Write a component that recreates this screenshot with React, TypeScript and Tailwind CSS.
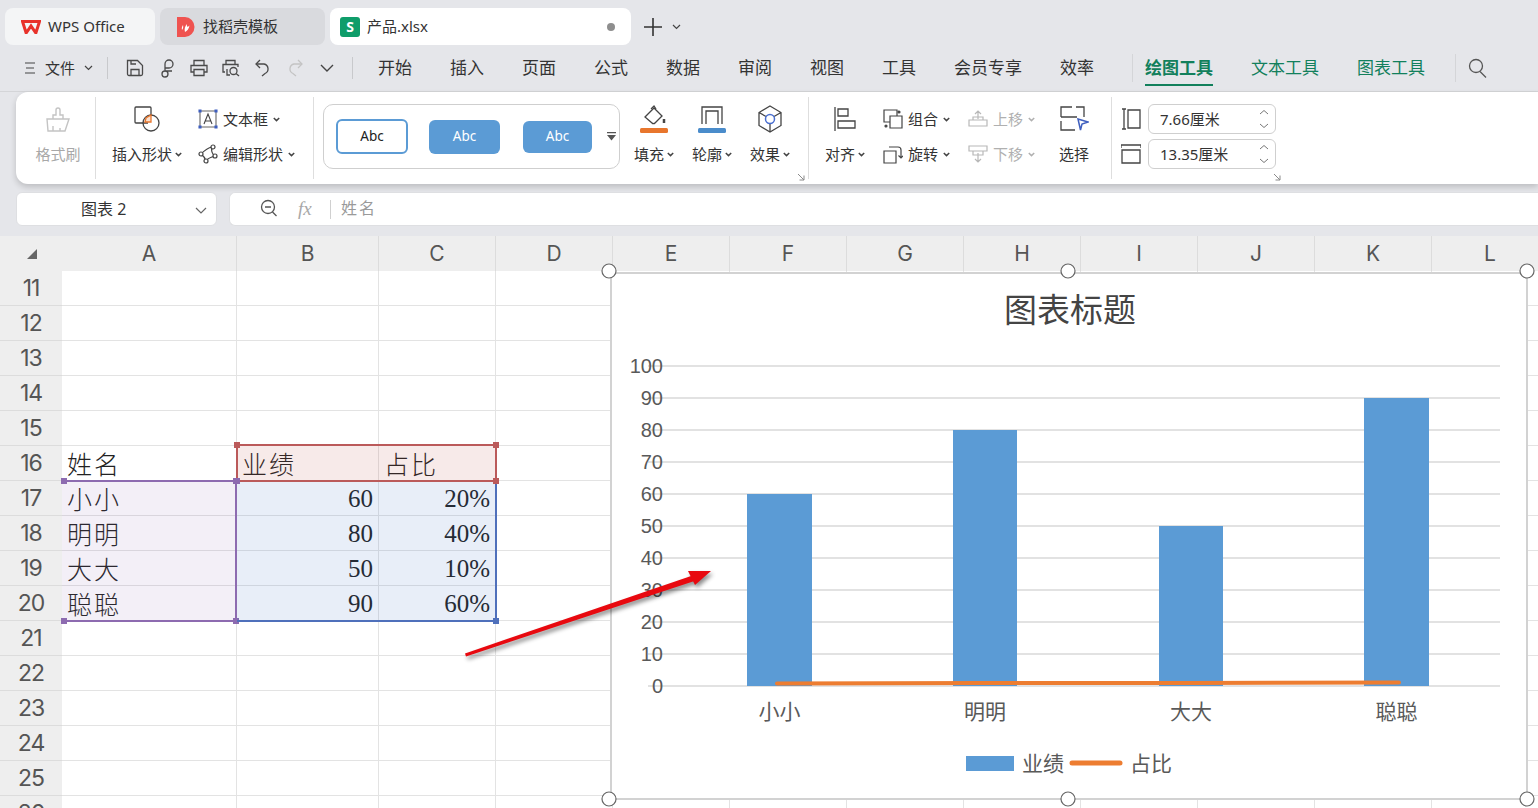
import React from "react"

const ui = "[font-family:Noto_Sans,Noto_Sans_CJK_SC,sans-serif]"

const menus = ["开始", "插入", "页面", "公式", "数据", "审阅", "视图", "工具", "会员专享", "效率"]
const columns = [
    { name: "A", width: "w-[175px]" },
    { name: "B", width: "w-[142px]" },
    { name: "C", width: "w-[117px]" },
    { name: "D", width: "w-[117px]" },
    { name: "E", width: "w-[117px]" },
    { name: "F", width: "w-[117px]" },
    { name: "G", width: "w-[117px]" },
    { name: "H", width: "w-[117px]" },
    { name: "I", width: "w-[117px]" },
    { name: "J", width: "w-[117px]" },
    { name: "K", width: "w-[117px]" },
    { name: "L", width: "w-[117px]" },
]
const rows: Record<number, [string, string, string]> = {
    16: ["姓名", "业绩", "占比"],
    17: ["小小", "60", "20%"],
    18: ["明明", "80", "40%"],
    19: ["大大", "50", "10%"],
    20: ["聪聪", "90", "60%"],
}
const rowNumbers = Array.from({ length: 16 }, (_, i) => i + 11)
const bars = [
    { x: 747, w: 65, v: 60, label: "小小" },
    { x: 953, w: 64, v: 80, label: "明明" },
    { x: 1159, w: 64, v: 50, label: "大大" },
    { x: 1364, w: 65, v: 90, label: "聪聪" },
]
const ticks = [100, 90, 80, 70, 60, 50, 40, 30, 20, 10, 0]

const Ico: React.FC<{ size?: number; stroke?: string; children: React.ReactNode }> = ({ size = 20, stroke = "#4a4a4a", children }) => (
    <svg width={size} height={size} viewBox="0 0 20 20" fill="none" stroke={stroke} strokeWidth="1.3" className="shrink-0">
        {children}
    </svg>
)

const Caret: React.FC<{ color?: string }> = ({ color = "#444" }) => (
    <svg width="7" height="5" viewBox="0 0 7 5" fill="none" stroke={color} strokeWidth="1.5" className="shrink-0">
        <path d="M.8 1l2.7 2.6L6.2 1" />
    </svg>
)

const Corner = () => (
    <svg width="8" height="8" viewBox="0 0 8 8" fill="none" stroke="#8a8a8a" strokeWidth="1">
        <path d="M1 1l6 6M7 2.500V7H2.500" />
    </svg>
)

const ToolCol: React.FC<{ label: string; width: string; gray?: boolean; caret?: boolean; children: React.ReactNode }> = ({ label, width, gray, caret = true, children }) => (
    <div className={`flex flex-col items-center pt-3 shrink-0 ${width}`}>
        <div className="h-[30px] flex items-center justify-center">{children}</div>
        <div className={`mt-[7px] h-[26px] flex items-center gap-[3px] text-[15px] ${gray ? "text-[#a8a8a8]" : "text-[#333]"}`}>
            {label}
            {caret && !gray && <Caret />}
        </div>
    </div>
)

const SmallBtn: React.FC<{ label: string; gray?: boolean; children: React.ReactNode }> = ({ label, gray, children }) => (
    <div className={`h-[30px] flex items-center text-[15px] whitespace-nowrap ${gray ? "text-[#b0b0b0]" : "text-[#333]"}`}>
        <span className="w-5 mr-[5px] flex justify-center">{children}</span>
        {label}
        <span className="ml-[5px]"><Caret color={gray ? "#b0b0b0" : "#444"} /></span>
    </div>
)

const Divider = () => <div className="w-px h-[82px] self-center bg-[#dedede] shrink-0" />

const SizeInput: React.FC<{ value: string }> = ({ value }) => (
    <div className="w-[128px] h-[30px] border border-[#cfcfcf] rounded-md flex items-center pl-[11px] pr-[6px] justify-between text-[15px] text-[#333]">
        {value}
        <svg width="10" height="22" viewBox="0 0 10 22" fill="none" stroke="#777" strokeWidth="1">
            <path d="M1 6l4-3.500L9 6M1 16l4 3.500 4-3.500" />
        </svg>
    </div>
)

const Handle: React.FC<{ className: string }> = ({ className }) => (
    <span className={`absolute w-[6px] h-[6px] ${className}`} />
)

function Tabs() {
    return (
        <div className="flex items-center h-[37px] mt-2 pl-[5px] gap-[5px] shrink-0">
            <div className="w-[150px] h-[37px] bg-[#f4f5f6] rounded-lg flex items-center pl-[16px] gap-[7px] text-[15px] text-[#333]">
                <svg width="20" height="14" viewBox="0 0 20 14" fill="none" stroke="#e8322b" strokeWidth="3">
                    <path d="M1.500 1.500h17L15 12.500h-.5L10 6l-4.500 6.500H5z" strokeLinejoin="miter" />
                </svg>
                WPS Office
            </div>
            <div className="w-[165px] h-[37px] bg-[#d9dade] rounded-lg flex items-center pl-[17px] gap-[8px] text-[15px] text-[#333]">
                <svg width="18" height="20" viewBox="0 0 18 20">
                    <path d="M0 0h8a9.500 10 0 0 1 0 20H0z" fill="#ef5350" />
                    <path d="M8 15c-1-3 0-6 2-8-.3 3 .2 3.500 2.500 1.500C12 12 10 14 8 15zM5 13c-.5-2 0-3.500 1-5 .3 2 .5 3 -1 5z" fill="#fff" />
                </svg>
                找稻壳模板
            </div>
            <div className="w-[301px] h-[37px] bg-white rounded-lg flex items-center pl-[10px] text-[15px] text-[#333]">
                <span className="w-5 h-5 rounded-[3px] bg-[#0f9d6a] text-white text-[14px] font-bold flex items-center justify-center">S</span>
                <span className="ml-[7px]">产品.xlsx</span>
                <span className="ml-auto mr-4 w-2 h-2 rounded-full bg-[#8e8e8e]" />
            </div>
            <svg width="20" height="20" viewBox="0 0 20 20" stroke="#333" strokeWidth="1.600" className="ml-[7px]">
                <path d="M10 1v18M1 10h18" />
            </svg>
            <svg width="9" height="6" viewBox="0 0 9 6" fill="none" stroke="#444" strokeWidth="1.200" className="ml-[4px]">
                <path d="M1 1l3.500 3.500L8 1" />
            </svg>
        </div>
    )
}

function MenuBar() {
    return (
        <div className="h-[47px] flex items-center shrink-0 border-b border-[#d4d5d8] text-[#333]">
            <svg width="14" height="14" viewBox="0 0 14 14" stroke="#444" strokeWidth="1.200" className="ml-[23px]">
                <path d="M2 2h10M3 7h8M2 12h10" />
            </svg>
            <span className="ml-[8px] text-[15px]">文件</span>
            <svg width="9" height="6" viewBox="0 0 9 6" fill="none" stroke="#444" strokeWidth="1.200" className="ml-[9px]">
                <path d="M1 1l3.500 3.500L8 1" />
            </svg>
            <div className="w-px h-[22px] bg-[#c8c9cc] ml-[14px]" />
            <div className="ml-[17px] flex items-center gap-[12px]">
                <Ico>
                    <path d="M2.500 2.500h10l5 5v8.500a1.500 1.500 0 0 1-1.500 1.500H4a1.500 1.500 0 0 1-1.500-1.500z" />
                    <path d="M6 17.500v-6h8v6M6 2.500v3.500h5" />
                </Ico>
                <Ico>
                    <path d="M8 13V6a4 4 0 1 1 4 4H8M8 13a3 3 0 1 1-3 3v0a3 3 0 0 1 3-3zM8 13h7" />
                </Ico>
                <Ico>
                    <path d="M5 7V2.500h10V7M5 14H2V7.500h16V14h-3" />
                    <path d="M5 11.500h10v6H5z" />
                </Ico>
                <Ico>
                    <path d="M5 6V2.500h9V6M4 14H2V6.500h15V9" />
                    <path d="M6 11v6h3" />
                    <circle cx="12.500" cy="13" r="3.500" />
                    <path d="M15 15.500l3 2.500" />
                </Ico>
                <Ico>
                    <path d="M7 2L3 6l4 4" />
                    <path d="M3 6h8a5 5 0 0 1 1 9.500L9 18" />
                </Ico>
                <Ico stroke="#c4c4c4">
                    <path d="M13 2l4 4-4 4" />
                    <path d="M17 6H9a5 5 0 0 0-1 9.500l3 2.500" />
                </Ico>
                <svg width="14" height="8" viewBox="0 0 14 8" fill="none" stroke="#444" strokeWidth="1.400" className="ml-[3px]">
                    <path d="M1 1l6 6 6-6" />
                </svg>
            </div>
            <div className="w-px h-[22px] bg-[#c8c9cc] ml-[18px]" />
            <div className="ml-[25px] flex items-center gap-[38px] text-[17px]">
                {menus.map(m => <span key={m}>{m}</span>)}
            </div>
            <div className="w-px h-[28px] bg-[#d4d5d8] ml-[38px]" />
            <div className="ml-[12px] flex items-center gap-[38px] text-[17px] text-[#12805c]">
                <span className="relative font-bold">
                    绘图工具
                    <span className="absolute left-0 right-0 -bottom-[5px] h-[2px] bg-[#12805c]" />
                </span>
                <span>文本工具</span>
                <span>图表工具</span>
            </div>
            <div className="w-px h-[28px] bg-[#d4d5d8] ml-[30px]" />
            <svg width="22" height="24" viewBox="0 0 22 24" fill="none" stroke="#555" strokeWidth="1.300" className="ml-[11px]">
                <circle cx="9" cy="10" r="6.500" />
                <path d="M13 15.500l6 6" />
            </svg>
        </div>
    )
}

function Ribbon() {
    return (
        <div className={`ml-4 h-[92px] bg-white rounded-l-xl shadow-[0_3px_6px_rgba(0,0,0,0.18)] flex shrink-0 ${ui}`}>
            <ToolCol label="格式刷" width="w-[79px] pl-[5px]" gray caret={false}>
                <svg width="26" height="26" viewBox="0 0 26 26" fill="none" stroke="#c4c4c4" strokeWidth="1.400">
                    <path d="M2 13h22l-4 12H3zM8 13V9h3V4a2 2 0 0 1 4 0v5h3v4M8 25v-5M15 25v-3" />
                </svg>
            </ToolCol>
            <Divider />
            <div className="w-[217px] flex shrink-0 pl-[15px]">
                <ToolCol label="插入形状" width="w-[72px]">
                    <svg width="28" height="28" viewBox="0 0 28 28" fill="none" stroke="#444" strokeWidth="1.300">
                        <path d="M15 18H3a1 1 0 0 1-1-1V3a1 1 0 0 1 1-1h14a1 1 0 0 1 1 1v8" />
                        <circle cx="18" cy="18" r="8" />
                        <path d="M12 17l1-4 5-3v7z" fill="#fbe1cf" stroke="#e8762d" />
                    </svg>
                </ToolCol>
                <div className="ml-[15px] pt-3 flex flex-col gap-[5px]">
                    <SmallBtn label="文本框">
                        <svg width="20" height="20" viewBox="0 0 20 20" fill="none" stroke="#444" strokeWidth="1.100">
                            <path d="M2 2v16M18 2v16M2 2h16M2 18h16" stroke="#666" />
                            <path d="M6 15l4-10 4 10M7.300 12h5.400" />
                            <path d="M1 1h2v2H1zM17 1h2v2h-2zM1 17h2v2H1zM17 17h2v2h-2z" fill="#3f5fbf" stroke="#3f5fbf" />
                        </svg>
                    </SmallBtn>
                    <SmallBtn label="编辑形状">
                        <svg width="20" height="20" viewBox="0 0 20 20" fill="none" stroke="#444" strokeWidth="1.200">
                            <path d="M14 3C9 4 6 7 3 10c3 2 4 4 5 7 2-3 5-4 9-5-3-2-4-5-3-9z" />
                            <circle cx="15" cy="3" r="2" fill="#fff" />
                            <circle cx="3" cy="10" r="2" fill="#fff" />
                            <circle cx="8" cy="17" r="2" fill="#fff" />
                            <circle cx="17" cy="12" r="2" fill="#fff" />
                        </svg>
                    </SmallBtn>
                </div>
            </div>
            <Divider />
            <div className="relative w-[494px] flex shrink-0 pl-[9px]">
                <div className="mt-3 w-[297px] h-[65px] border border-[#cfcfcf] rounded-[10px] flex items-center pl-3 text-[13.500px] shrink-0">
                    <div className="w-[72px] h-[35px] rounded-md border-2 border-[#5b9bd5] flex items-center justify-center text-[#222]">Abc</div>
                    <div className="ml-[21px] w-[71px] h-[34px] rounded-md bg-[#5b9bd5] flex items-center justify-center text-white">Abc</div>
                    <div className="ml-[23px] w-[69px] h-[32px] rounded-md bg-[#5b9bd5] flex items-center justify-center text-white">Abc</div>
                    <svg width="9" height="10" viewBox="0 0 9 10" className="ml-[15px]" fill="#555">
                        <path d="M0 0h9v1.200H0zM0 3h9L4.500 8.500z" />
                    </svg>
                </div>
                <div className="ml-[5px] flex">
                    <ToolCol label="填充" width="w-[58px]">
                        <svg width="30" height="30" viewBox="0 0 30 30" fill="none" stroke="#444" strokeWidth="1.300">
                            <path d="M6 13l9-9 8 8-7 7a2 2 0 0 1-3 0z" />
                            <path d="M12 5l3-3 2 3" />
                            <path d="M25 15v4" strokeWidth="2.500" />
                            <rect x="1" y="24" width="28" height="5" rx="1.500" fill="#e8762d" stroke="none" />
                        </svg>
                    </ToolCol>
                    <ToolCol label="轮廓" width="w-[58px]">
                        <svg width="30" height="30" viewBox="0 0 30 30" fill="none" stroke="#444" strokeWidth="1.300">
                            <path d="M5 20V3h20v17M9 20V7h12v13" />
                            <rect x="1" y="24" width="28" height="5" rx="1.500" fill="#4a8ccb" stroke="none" />
                        </svg>
                    </ToolCol>
                    <ToolCol label="效果" width="w-[58px]">
                        <svg width="28" height="30" viewBox="0 0 28 30" fill="none" stroke="#444" strokeWidth="1.300">
                            <path d="M14 2l11 6.500v13L14 28 3 21.500v-13zM3 8.500l7 4M25 8.500l-7 4M14 20v8" />
                            <circle cx="14" cy="15" r="4.500" stroke="#4a6fd0" strokeWidth="1.500" />
                        </svg>
                    </ToolCol>
                </div>
                <span className="absolute right-[3px] bottom-[3px]"><Corner /></span>
            </div>
            <Divider />
            <div className="w-[302px] flex shrink-0 pl-3">
                <ToolCol label="对齐" width="w-[48px]">
                    <svg width="24" height="26" viewBox="0 0 24 26" fill="none" stroke="#444" strokeWidth="1.300">
                        <path d="M2 1v24" />
                        <path d="M5 3h10v7H5zM5 15h17v7H5z" />
                    </svg>
                </ToolCol>
                <div className="ml-[14px] w-[85px] pt-3 flex flex-col gap-[5px] shrink-0">
                    <SmallBtn label="组合">
                        <svg width="20" height="20" viewBox="0 0 20 20" fill="none" stroke="#444" strokeWidth="1.200">
                            <path d="M7 13H1V1h13v6" />
                            <path d="M7 7h12v12H7z" />
                            <circle cx="16" cy="3" r="1" fill="#444" />
                            <circle cx="3" cy="17" r="1" fill="#444" />
                        </svg>
                    </SmallBtn>
                    <SmallBtn label="旋转">
                        <svg width="20" height="20" viewBox="0 0 20 20" fill="none" stroke="#444" strokeWidth="1.200">
                            <path d="M1 7h12v12H1z" />
                            <path d="M6 3h9a3 3 0 0 1 3 3v8M15.500 11.500L18 14l2.500-2.500" />
                        </svg>
                    </SmallBtn>
                </div>
                <div className="w-[80px] pt-3 flex flex-col gap-[5px] shrink-0">
                    <SmallBtn label="上移" gray>
                        <svg width="20" height="20" viewBox="0 0 20 20" fill="none" stroke="#b8b8b8" strokeWidth="1.200">
                            <path d="M10 10V2M7 5l3-3 3 3M5 8h10v3H5zM1 11h18v6H1z" />
                        </svg>
                    </SmallBtn>
                    <SmallBtn label="下移" gray>
                        <svg width="20" height="20" viewBox="0 0 20 20" fill="none" stroke="#b8b8b8" strokeWidth="1.200">
                            <path d="M1 2h18v5H1zM5 7h10v4H5zM10 9v9M7 15l3 3 3-3" />
                        </svg>
                    </SmallBtn>
                </div>
                <ToolCol label="选择" width="w-[52px]" caret={false}>
                    <svg width="30" height="28" viewBox="0 0 30 28" fill="none" stroke="#444" strokeWidth="1.300">
                        <path d="M2 12V2h11M17 2h8v10M2 16v9h14M2 12h16" />
                        <path d="M19 14l10 3-6 2-1.500 6z" stroke="#3f5fbf" strokeWidth="1.500" fill="#fff" />
                    </svg>
                </ToolCol>
            </div>
            <Divider />
            <div className="relative flex-1 pl-[9px] pt-3 flex flex-col gap-[5px]">
                <div className="flex items-center gap-[7px]">
                    <svg width="20" height="22" viewBox="0 0 20 22" fill="none" stroke="#444" strokeWidth="1.300">
                        <path d="M1 1h4M1 21h4M3 1v20M7 2h12v18H7z" />
                    </svg>
                    <SizeInput value="7.66厘米" />
                </div>
                <div className="flex items-center gap-[7px]">
                    <svg width="20" height="22" viewBox="0 0 20 22" fill="none" stroke="#444" strokeWidth="1.300">
                        <path d="M0 2h20M0 2v3M20 2v3M1 7h18v13H1z" />
                    </svg>
                    <SizeInput value="13.35厘米" />
                </div>
                <span className="absolute left-[161px] bottom-[3px]"><Corner /></span>
            </div>
        </div>
    )
}

function FormulaBar() {
    return (
        <div className={`h-[34px] mt-2 flex gap-3 pl-4 shrink-0 ${ui}`}>
            <div className="w-[201px] bg-white rounded-md border border-[#dedfe2] flex items-center text-[16px] text-[#333] relative">
                <span className="ml-[64px]">图表 2</span>
                <svg width="12" height="7" viewBox="0 0 12 7" fill="none" stroke="#666" strokeWidth="1.200" className="absolute right-[9px] top-[14px]">
                    <path d="M1 1l5 5 5-5" />
                </svg>
            </div>
            <div className="flex-1 bg-white rounded-l-md border border-[#dedfe2] border-r-0 flex items-center">
                <svg width="20" height="20" viewBox="0 0 20 20" fill="none" stroke="#555" strokeWidth="1.300" className="ml-[29px] -mt-[3px]">
                    <circle cx="9" cy="9" r="6.500" />
                    <path d="M6 9h6M13.500 14l4 4" />
                </svg>
                <span className="ml-[19px] w-[20px] [font-family:Liberation_Serif,serif] italic text-[19px] text-[#a8a8a8]">fx</span>
                <span className="ml-[12px] w-px h-[19px] bg-[#d0d0d0]" />
                <span className="ml-[10px] -mt-[3px] text-[16px] tracking-[2px] text-[#9a9a9a]">姓名</span>
            </div>
        </div>
    )
}

function Chart() {
    return (
        <div className="absolute left-[610px] top-[36px] w-[918px] h-[528px] bg-white border-2 border-[#d2d2d2]">
            <svg viewBox="612 274 914 524" width="914" height="524" className="overflow-visible [font-family:Liberation_Sans,Noto_Sans_CJK_SC,sans-serif]">
                <text x="1070" y="322" textAnchor="middle" fontSize="33" fill="#444">图表标题</text>
                {ticks.map((t, i) => (
                    <g key={t}>
                        <line x1="648" x2="1500" y1={366 + i * 32} y2={366 + i * 32} stroke="#e2e2e2" strokeWidth="2" />
                        <text x="663" y={373 + i * 32} textAnchor="end" fontSize="20" fill="#595959">{t}</text>
                    </g>
                ))}
                {bars.map(b => (
                    <g key={b.label}>
                        <rect x={b.x} y={686 - b.v * 3.2} width={b.w} height={b.v * 3.2} fill="#5b9bd5" />
                        <text x={b.x + b.w / 2} y="719" textAnchor="middle" fontSize="21" fill="#595959">{b.label}</text>
                    </g>
                ))}
                <path d="M777 683.500L983 683L1190 683L1399 682.500" stroke="#ed7d31" strokeWidth="4" fill="none" strokeLinecap="round" />
                <rect x="966" y="756" width="48" height="15" fill="#5b9bd5" />
                <text x="1022" y="771" fontSize="21" fill="#595959">业绩</text>
                <line x1="1072" x2="1120" y1="763" y2="763" stroke="#ed7d31" strokeWidth="5" strokeLinecap="round" />
                <text x="1130" y="771" fontSize="21" fill="#595959">占比</text>
                {[609, 1068, 1527].flatMap(x => [271, 799].map(y => (
                    <circle key={`${x}-${y}`} cx={x} cy={y} r="7" fill="#fff" stroke="#666" strokeWidth="1.200" />
                )))}
            </svg>
        </div>
    )
}

function Sheet() {
    return (
        <div className="relative flex-1 mt-[10px] overflow-hidden bg-white">
            <div className="flex h-[35px] bg-[#eeeeee]">
                <div className="w-[62px] flex items-center justify-center shrink-0">
                    <svg width="12" height="12" viewBox="0 0 12 12" className="ml-[2px]">
                        <path d="M11 1v10H1z" fill="#666" />
                    </svg>
                </div>
                {columns.map(c => (
                    <div key={c.name} className={`${c.width} shrink-0 border-r border-[#dcdcdc] flex items-center justify-center text-[21px] text-[#555] [font-family:Inter,sans-serif]`}>
                        {c.name}
                    </div>
                ))}
            </div>
            {rowNumbers.map(n => (
                <div key={n} className="flex h-[35px]">
                    <div className="w-[62px] shrink-0 bg-[#eeeeee] border-b border-[#dcdcdc] flex items-center justify-center text-[23px] text-[#555] [font-family:Inter,sans-serif] tracking-[-1px]">
                        {n}
                    </div>
                    {columns.map((c, i) => {
                        const value = rows[n]?.[i]
                        const numeric = value !== undefined && /\d/.test(value)
                        return (
                            <div key={c.name} className={`${c.width} shrink-0 border-r border-b border-[#e3e3e3] flex items-center px-[5px] text-[25px] leading-none text-[#222] ${numeric ? "justify-end [font-family:Liberation_Serif,serif]" : "[font-family:Noto_Sans_CJK_SC,serif] font-light tracking-[2px]"}`}>
                                {value}
                            </div>
                        )
                    })}
                </div>
            ))}

            {/* range highlights left by the chart's data selection */}
            <div className="absolute left-[62px] top-[244px] w-[175px] h-[142px] bg-[#8e5fb5]/10 border-t-2 border-r-2 border-b-2 border-[#8d6bb0]">
                <Handle className="-left-px -top-[4px] w-[4px] h-[6px] bg-[#8d6bb0]" />
                <Handle className="-left-px -bottom-[4px] w-[4px] h-[6px] bg-[#8d6bb0]" />
                <Handle className="-right-[4px] -top-[4px] bg-[#8d6bb0]" />
                <Handle className="-right-[4px] -bottom-[4px] bg-[#8d6bb0]" />
            </div>
            <div className="absolute left-[237px] top-[244px] w-[260px] h-[142px] bg-[#4472c4]/12 border-r-2 border-b-2 border-[#4f70bb]">
                <Handle className="-right-[4px] -bottom-[4px] bg-[#4f70bb]" />
            </div>
            <div className="absolute left-[236px] top-[208px] w-[261px] h-[38px] bg-[#c0504d]/12 border-2 border-[#bb5a5a]">
                <Handle className="-left-[4px] -top-[4px] bg-[#bb5a5a]" />
                <Handle className="-right-[4px] -top-[4px] bg-[#bb5a5a]" />
                <Handle className="-left-[4px] -bottom-[4px] bg-[#8d6bb0]" />
                <Handle className="-right-[4px] -bottom-[4px] bg-[#bb5a5a]" />
            </div>

            <Chart />

            <svg width="260" height="100" viewBox="460 565 260 100" className="absolute left-[460px] top-[329px] drop-shadow-[2px_3px_2px_rgba(0,0,0,0.45)]">
                <path d="M465 653.500L694 575L696 580.500L466 656.500z" fill="#e8090f" />
                <path d="M711 571L688 571L695 585z" fill="#e8090f" />
            </svg>
        </div>
    )
}

export default function App() {
    return (
        <div className={`w-[1538px] h-[808px] overflow-hidden bg-[#e5e6ea] flex flex-col ${ui}`}>
            <Tabs />
            <MenuBar />
            <Ribbon />
            <FormulaBar />
            <Sheet />
        </div>
    )
}
